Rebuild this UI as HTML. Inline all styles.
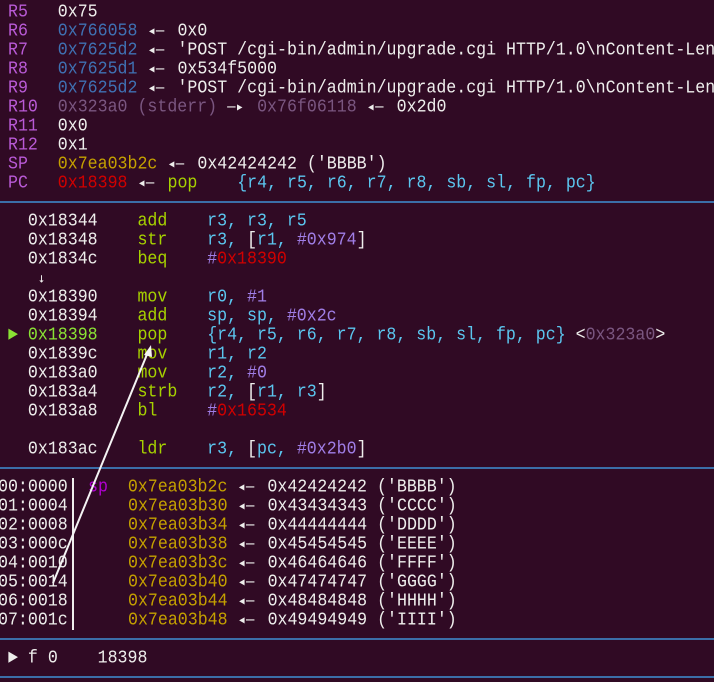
<!DOCTYPE html>
<html><head><meta charset="utf-8"><style>
html,body{margin:0;padding:0;background:#300a24;width:714px;height:682px;overflow:hidden;position:relative}
.r{position:absolute;left:8px;height:19px;line-height:19px;white-space:pre;font-family:"Liberation Mono","DejaVu Sans Mono",monospace;font-size:16.6px;color:#eeeeec;transform:scaleY(1.12);transform-origin:0 50%}
.sep{position:absolute;left:0;width:714px;height:2px;background:#3b6ea8}
.m{color:#b95ad6}.b{color:#3f71b3}.g{color:#7a5680}.y{color:#c4a000}.rd{color:#d00000}
.n{color:#a6d100}.c{color:#5bc6ef}.p{color:#a07ee6}.pg{color:#8ae234}.sp{color:#b000d0}
.a{display:inline-block;width:30px;font-family:"DejaVu Sans Mono",monospace;font-size:14px;text-align:left}
</style></head><body>
<div class="r" style="top:2px"><span class="m">R5 </span>  0x75</div>
<div class="r" style="top:21px"><span class="m">R6 </span>  <span class="b">0x766058</span> <span class="a">◂—</span>0x0</div>
<div class="r" style="top:40px"><span class="m">R7 </span>  <span class="b">0x7625d2</span> <span class="a">◂—</span>'POST /cgi-bin/admin/upgrade.cgi HTTP/1.0\nContent-Len</div>
<div class="r" style="top:59px"><span class="m">R8 </span>  <span class="b">0x7625d1</span> <span class="a">◂—</span>0x534f5000</div>
<div class="r" style="top:78px"><span class="m">R9 </span>  <span class="b">0x7625d2</span> <span class="a">◂—</span>'POST /cgi-bin/admin/upgrade.cgi HTTP/1.0\nContent-Len</div>
<div class="r" style="top:97px"><span class="m">R10</span>  <span class="g">0x323a0 (stderr) <span class="a" style="color:#eeeeec">—▸</span>0x76f06118</span> <span class="a">◂—</span>0x2d0</div>
<div class="r" style="top:116px"><span class="m">R11</span>  0x0</div>
<div class="r" style="top:135px"><span class="m">R12</span>  0x1</div>
<div class="r" style="top:154px"><span class="m">SP </span>  <span class="y">0x7ea03b2c</span> <span class="a">◂—</span>0x42424242 ('BBBB')</div>
<div class="r" style="top:173px"><span class="m">PC </span>  <span class="rd">0x18398</span> <span class="a">◂—</span><span class="n">pop</span>    <span class="c">{r4, r5, r6, r7, r8, sb, sl, fp, pc}</span></div>
<div class="sep" style="top:201px"></div>
<div class="r" style="top:211px">  0x18344    <span class="n">add</span>    <span class="c">r3, r3, r5</span></div>
<div class="r" style="top:230px">  0x18348    <span class="n">str</span>    <span class="c">r3, </span>[<span class="c">r1, </span><span class="p">#0x974</span>]</div>
<div class="r" style="top:249px">  0x1834c    <span class="n">beq</span>    <span class="p">#</span><span class="rd">0x18390</span></div>
<div class="r" style="top:268px">   <span style="font-family:'DejaVu Sans Mono';font-size:12px">↓</span></div>
<div class="r" style="top:287px">  0x18390    <span class="n">mov</span>    <span class="c">r0, </span><span class="p">#1</span></div>
<div class="r" style="top:306px">  0x18394    <span class="n">add</span>    <span class="c">sp, sp, </span><span class="p">#0x2c</span></div>
<div class="r" style="top:325px"><span class="pg">► 0x18398</span>    <span class="n">pop</span>    <span class="c">{r4, r5, r6, r7, r8, sb, sl, fp, pc}</span> &lt;<span class="g">0x323a0</span>&gt;</div>
<div class="r" style="top:344px">  0x1839c    <span class="n">mov</span>    <span class="c">r1, r2</span></div>
<div class="r" style="top:363px">  0x183a0    <span class="n">mov</span>    <span class="c">r2, </span><span class="p">#0</span></div>
<div class="r" style="top:382px">  0x183a4    <span class="n">strb</span>   <span class="c">r2, </span>[<span class="c">r1, r3</span>]</div>
<div class="r" style="top:401px">  0x183a8    <span class="n">bl</span>     <span class="p">#</span><span class="rd">0x16534</span></div>
<div class="r" style="top:439px">  0x183ac    <span class="n">ldr</span>    <span class="c">r3, </span>[<span class="c">pc, </span><span class="p">#0x2b0</span>]</div>
<div class="sep" style="top:467px"></div>
<div class="r" style="top:477px;left:-2px">00:0000 </div>
<div class="r" style="top:496px;left:-2px">01:0004 </div>
<div class="r" style="top:515px;left:-2px">02:0008 </div>
<div class="r" style="top:534px;left:-2px">03:000c </div>
<div class="r" style="top:553px;left:-2px">04:0010 </div>
<div class="r" style="top:572px;left:-2px">05:0014 </div>
<div class="r" style="top:591px;left:-2px">06:0018 </div>
<div class="r" style="top:610px;left:-2px">07:001c </div>
<div style="position:absolute;left:72px;top:478px;width:2px;height:152px;background:#eeeeec"></div>
<div class="r" style="top:477px;left:88px"><span class="sp">sp</span>  <span class="y">0x7ea03b2c</span> <span class="a">◂—</span>0x42424242 ('BBBB')</div>
<div class="r" style="top:496px;left:128px"><span class="y">0x7ea03b30</span> <span class="a">◂—</span>0x43434343 ('CCCC')</div>
<div class="r" style="top:515px;left:128px"><span class="y">0x7ea03b34</span> <span class="a">◂—</span>0x44444444 ('DDDD')</div>
<div class="r" style="top:534px;left:128px"><span class="y">0x7ea03b38</span> <span class="a">◂—</span>0x45454545 ('EEEE')</div>
<div class="r" style="top:553px;left:128px"><span class="y">0x7ea03b3c</span> <span class="a">◂—</span>0x46464646 ('FFFF')</div>
<div class="r" style="top:572px;left:128px"><span class="y">0x7ea03b40</span> <span class="a">◂—</span>0x47474747 ('GGGG')</div>
<div class="r" style="top:591px;left:128px"><span class="y">0x7ea03b44</span> <span class="a">◂—</span>0x48484848 ('HHHH')</div>
<div class="r" style="top:610px;left:128px"><span class="y">0x7ea03b48</span> <span class="a">◂—</span>0x49494949 ('IIII')</div>
<div class="sep" style="top:638px"></div>
<div class="r" style="top:648px">► f 0    18398</div>
<div class="sep" style="top:676px"></div>
<svg style="position:absolute;left:0;top:0" width="714" height="682">
<line x1="53" y1="583" x2="148" y2="352" stroke="#f4f4f4" stroke-width="2"/>
<polygon points="151,345 144,355 152,357" fill="#f4f4f4"/>
</svg>
</body></html>
